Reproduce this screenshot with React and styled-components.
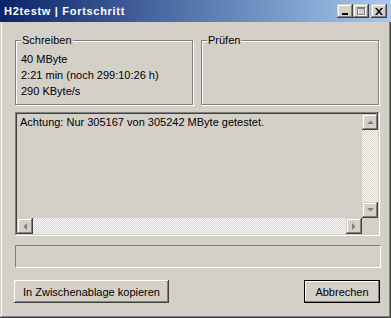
import React from 'react';
import styled, { createGlobalStyle } from 'styled-components';

const GlobalStyle = createGlobalStyle`
  html, body {
    margin: 0;
    padding: 0;
    background: #d4d0c8;
  }
  body {
    font-family: "Liberation Sans", Arial, sans-serif;
    font-size: 11px;
    color: #000;
  }
`;

const bevelOut = `
  box-shadow: inset -1px -1px #404040, inset 1px 1px #ffffff,
    inset -2px -2px #808080, inset 2px 2px #d4d0c8;
`;

const Window = styled.div`
  width: 391px;
  height: 318px;
  box-sizing: border-box;
  display: flex;
  flex-direction: column;
  background: #d4d0c8;
  box-shadow: inset -1px -1px #404040, inset 1px 1px #d4d0c8,
    inset -2px -2px #808080, inset 2px 2px #ffffff;
`;

const TitleBar = styled.div`
  height: 22px;
  display: flex;
  align-items: center;
  padding: 0 4px 0 4px;
  background: linear-gradient(90deg, #0a246a 0%, #a6caf0 100%);
`;

const Title = styled.div`
  flex: 1;
  color: #fff;
  font-weight: bold;
  font-size: 11px;
  letter-spacing: 0.7px;
`;

const CaptionButtons = styled.div`
  display: flex;
  align-items: center;
`;

const CaptionButton = styled.div`
  width: 16px;
  height: 14px;
  margin-left: ${({ gap }) => gap || 0}px;
  background: #d4d0c8;
  display: flex;
  align-items: center;
  justify-content: center;
  box-shadow: inset -1px -1px #404040, inset 1px 1px #d4d0c8,
    inset -2px -2px #808080, inset 2px 2px #ffffff;
`;

const Content = styled.div`
  flex: 1;
  display: flex;
  flex-direction: column;
  padding: 18px 11px 0 15px;
`;

const GroupRow = styled.div`
  display: grid;
  grid-template-columns: 178px 178px;
  column-gap: 8px;
`;

const GroupBox = styled.div`
  position: relative;
  height: 65px;
  box-sizing: border-box;
  border: 1px solid #808080;
  box-shadow: inset 1px 1px #fff, 1px 1px #fff;
  padding: 10px 5px 0;
`;

const Legend = styled.span`
  position: absolute;
  left: 5px;
  top: -7px;
  padding: 0 1px;
  line-height: 13px;
  background: #d4d0c8;
`;

const Line = styled.div`
  line-height: 16px;
  white-space: nowrap;
`;

const Memo = styled.div`
  margin-top: 7px;
  height: 124px;
  box-sizing: border-box;
  padding: 2px;
  display: grid;
  grid-template-columns: 1fr 16px;
  grid-template-rows: 1fr 16px;
  box-shadow: inset -1px -1px #ffffff, inset 1px 1px #808080,
    inset -2px -2px #d4d0c8, inset 2px 2px #404040;
`;

const MemoText = styled.div`
  padding: 1px 3px;
  line-height: 14px;
  white-space: nowrap;
  overflow: hidden;
`;

const track = `
  background: repeating-conic-gradient(#ffffff 0 25%, #d4d0c8 0 50%) 0 0 / 2px 2px;
`;

const VScroll = styled.div`
  display: flex;
  flex-direction: column;
  ${track}
`;

const HScroll = styled.div`
  display: flex;
  ${track}
`;

const Track = styled.div`
  flex: 1;
`;

const Corner = styled.div`
  background: #d4d0c8;
`;

const ScrollButton = styled.div`
  width: 16px;
  height: 16px;
  flex: none;
  background: #d4d0c8;
  display: flex;
  align-items: center;
  justify-content: center;
  box-shadow: inset -1px -1px #404040, inset 1px 1px #d4d0c8,
    inset -2px -2px #808080, inset 2px 2px #ffffff;
`;

const Progress = styled.div`
  margin-top: 9px;
  height: 23px;
  width: 366px;
  box-sizing: border-box;
  border: 1px solid;
  border-color: #808080 #ffffff #ffffff #808080;
`;

const ButtonRow = styled.div`
  margin-top: 12px;
  display: flex;
  justify-content: space-between;
  margin-left: -1px;
  width: 366px;
`;

const Button = styled.div`
  width: ${({ w }) => w}px;
  height: 23px;
  box-sizing: border-box;
  display: flex;
  align-items: center;
  justify-content: center;
  background: #d4d0c8;
  ${({ primary }) =>
    primary
      ? `border: 1px solid #000;
         box-shadow: inset -1px -1px #808080, inset 1px 1px #ffffff;`
      : bevelOut}
`;

const Arrow = ({ dir }) => {
  const pts = {
    up: '0,4 7,4 3.5,0.5',
    down: '0,0 7,0 3.5,3.5',
    left: '4,0 4,7 0.5,3.5',
    right: '0,0 0,7 3.5,3.5',
  }[dir];
  const vertical = dir === 'up' || dir === 'down';
  return (
    <svg width={vertical ? 7 : 4} height={vertical ? 4 : 7} viewBox={vertical ? '0 0 7 4' : '0 0 4 7'}>
      <polygon points={pts} fill="#808080" />
    </svg>
  );
};

export default function App() {
  return (
    <>
      <GlobalStyle />
      <Window>
        <TitleBar>
          <Title>H2testw | Fortschritt</Title>
          <CaptionButtons>
            <CaptionButton>
              <svg width="8" height="8" viewBox="0 0 8 8">
                <rect x="1" y="6" width="6" height="2" fill="#000" />
              </svg>
            </CaptionButton>
            <CaptionButton>
              <svg width="9" height="9" viewBox="0 0 9 9">
                <rect x="1.5" y="1.5" width="7" height="7" fill="none" stroke="#ffffff" />
                <rect x="0.5" y="0.5" width="7" height="7" fill="none" stroke="#808080" />
                <rect x="0" y="1" width="8" height="1" fill="#808080" />
              </svg>
            </CaptionButton>
            <CaptionButton gap={2}>
              <svg width="8" height="7" viewBox="0 0 8 7">
                <path d="M0 0h2l2 2.5L6 0h2L5 3.5 8 7H6L4 4.5 2 7H0l3-3.5z" fill="#000" />
              </svg>
            </CaptionButton>
          </CaptionButtons>
        </TitleBar>
        <Content>
          <GroupRow>
            <GroupBox>
              <Legend>Schreiben</Legend>
              <Line>40 MByte</Line>
              <Line>2:21 min (noch 299:10:26 h)</Line>
              <Line>290 KByte/s</Line>
            </GroupBox>
            <GroupBox>
              <Legend>Prüfen</Legend>
            </GroupBox>
          </GroupRow>
          <Memo>
            <MemoText>Achtung: Nur 305167 von 305242 MByte getestet.</MemoText>
            <VScroll>
              <ScrollButton><Arrow dir="up" /></ScrollButton>
              <Track />
              <ScrollButton><Arrow dir="down" /></ScrollButton>
            </VScroll>
            <HScroll>
              <ScrollButton><Arrow dir="left" /></ScrollButton>
              <Track />
              <ScrollButton><Arrow dir="right" /></ScrollButton>
            </HScroll>
            <Corner />
          </Memo>
          <Progress />
          <ButtonRow>
            <Button w={155}>In Zwischenablage kopieren</Button>
            <Button w={76} primary>Abbrechen</Button>
          </ButtonRow>
        </Content>
      </Window>
    </>
  );
}
